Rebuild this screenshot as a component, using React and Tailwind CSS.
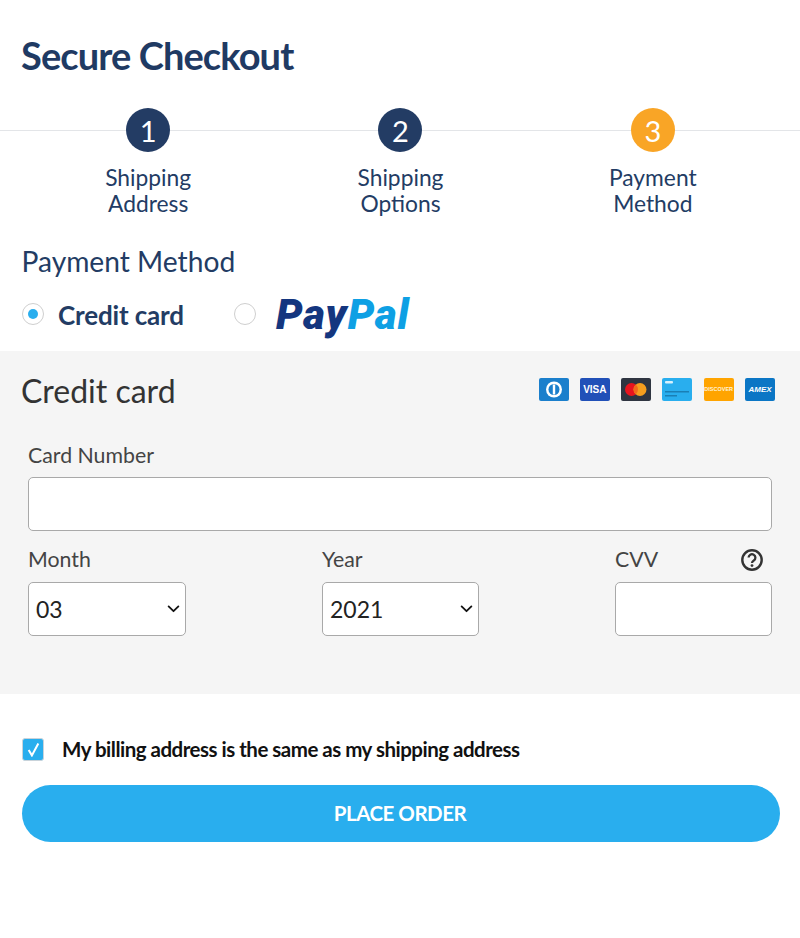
const steps = [
  { n: 1, label: ["Shipping", "Address"], done: true },
  { n: 2, label: ["Shipping", "Options"], done: true },
  { n: 3, label: ["Payment", "Method"], done: false },
];

const DinersIcon = () => (
  <svg viewBox="0 0 30 23" className="w-[30px] h-[23px]">
    <rect width="30" height="23" rx="2" fill="#1b7fcc" />
    <circle cx="15" cy="11.5" r="8" fill="#fff" />
    <circle cx="15" cy="11.5" r="5.5" fill="#1b7fcc" />
    <rect x="13.8" y="6.5" width="2.4" height="10" fill="#fff" />
  </svg>
);

const VisaIcon = () => (
  <div className="w-[30px] h-[23px] rounded-[2px] bg-[#2150b8] flex items-center justify-center text-white text-[10px] font-black leading-none">
    VISA
  </div>
);

const MastercardIcon = () => (
  <svg viewBox="0 0 30 23" className="w-[30px] h-[23px]">
    <rect width="30" height="23" rx="2" fill="#2f3541" />
    <circle cx="10.5" cy="11.5" r="6.5" fill="#e8141e" />
    <circle cx="19" cy="11.5" r="6.5" fill="#f59e1e" />
    <path d="M14.75 6.6a6.5 6.5 0 0 1 0 9.8a6.5 6.5 0 0 1 0-9.8z" fill="#f26a1b" />
  </svg>
);

const GenericCardIcon = () => (
  <svg viewBox="0 0 30 23" className="w-[30px] h-[23px]">
    <rect width="30" height="23" rx="2" fill="#29aeee" />
    <rect x="3" y="3" width="8" height="2.5" rx="1" fill="#d8f1fd" />
    <rect x="3" y="13" width="24" height="1.5" fill="#1a7fb5" />
    <rect x="3" y="17" width="12" height="1.5" fill="#1a7fb5" />
  </svg>
);

const DiscoverIcon = () => (
  <div className="w-[30px] h-[23px] rounded-[2px] bg-[#ffa400] flex items-center justify-center text-[#fff3d6] text-[5.5px] font-bold leading-none">
    DISCOVER
  </div>
);

const AmexIcon = () => (
  <div className="w-[30px] h-[23px] rounded-[2px] bg-[#0b76c5] flex items-center justify-center text-white text-[8px] font-black italic leading-none">
    AMEX
  </div>
);

const Chevron = () => (
  <svg viewBox="0 0 14 9" className="absolute right-[5px] top-[22px] w-[13px] h-[8px] pointer-events-none">
    <path d="M1.5 1.5L7 7l5.5-5.5" fill="none" stroke="#111" strokeWidth="2" strokeLinecap="round" strokeLinejoin="round" />
  </svg>
);

const App = () => {
  return (
    <div className="w-[800px] h-[938px] bg-white font-['Lato','Noto_Sans',sans-serif] overflow-hidden">
      <h1 className="pl-[21px] pt-[32px] text-[38px] leading-[46px] font-bold tracking-[-0.9px] text-[#1f3a63]">
        Secure Checkout
      </h1>

      {/* Steps */}
      <div className="relative mt-[30px] pl-[22px] pr-[21px]">
        <div className="absolute left-0 right-0 top-[22px] h-px bg-[#e3e5e8]" />
        <div className="relative grid grid-cols-3">
          {steps.map((step) => (
            <div key={step.n} className="flex flex-col items-center">
              <div
                className={`w-[44px] h-[44px] rounded-full flex items-center justify-center text-white text-[29px] leading-none ${
                  step.done ? "bg-[#233c64]" : "bg-[#f9a526]"
                }`}
              >
                {step.n}
              </div>
              <div className="mt-[12px] text-center text-[22.8px] leading-[26px] text-[#233c64]">
                {step.label.map((line) => (
                  <div key={line}>{line}</div>
                ))}
              </div>
            </div>
          ))}
        </div>
      </div>

      <h2 className="pl-[21.5px] mt-[26px] text-[28.2px] leading-[38px] text-[#233c64]">Payment Method</h2>

      {/* Method choice */}
      <div className="flex items-center px-[22px] mt-[10px] h-[50px]">
        <div className="w-[22px] h-[22px] rounded-full border border-[#cfcfcf] flex items-center justify-center mb-[3px]">
          <div className="w-[10px] h-[10px] rounded-full bg-[#29aeee]" />
        </div>
        <span className="ml-[14px] text-[26px] font-bold tracking-[-0.15px] text-[#233c64]">Credit card</span>
        <div className="ml-[50px] w-[22px] h-[22px] rounded-full border border-[#cfcfcf] mb-[3px]" />
        <span className="ml-[20px] text-[42px] leading-none font-black italic tracking-[1px] font-['Roboto',sans-serif]">
          <span className="text-[#14367f]">Pay</span>
          <span className="text-[#0ea0e4]">Pal</span>
        </span>
      </div>

      {/* Credit card panel */}
      <div className="mt-[11px] h-[343px] bg-[#f5f5f5] pt-[20px]">
        <div className="flex items-center justify-between pl-[21px] pr-[25px]">
          <h3 className="text-[32px] leading-[40px] text-[#333]">Credit card</h3>
          <div className="flex gap-[11.3px] mb-[3px] font-['Liberation_Sans',sans-serif]">
            <DinersIcon />
            <VisaIcon />
            <MastercardIcon />
            <GenericCardIcon />
            <DiscoverIcon />
            <AmexIcon />
          </div>
        </div>

        <div className="px-[28px] mt-[30px]">
          <label className="block text-[21.3px] leading-[28px] text-[#444]">Card Number</label>
          <div className="mt-[8px] h-[54px] bg-white border border-[#a9a9a9] rounded-[5px]" />

          <div className="grid grid-cols-[158px_157px_157px] justify-between mt-[14px]">
            <div>
              <label className="block text-[21.3px] leading-[28px] text-[#444]">Month</label>
              <div className="relative mt-[9px] h-[54px] bg-white border border-[#a9a9a9] rounded-[5px] pl-[7px] flex items-center text-[23px] text-[#222]">
                03
                <Chevron />
              </div>
            </div>
            <div>
              <label className="block text-[21.3px] leading-[28px] text-[#444]">Year</label>
              <div className="relative mt-[9px] h-[54px] bg-white border border-[#a9a9a9] rounded-[5px] pl-[7px] flex items-center text-[23px] text-[#222]">
                2021
                <Chevron />
              </div>
            </div>
            <div>
              <div className="flex items-center justify-between pr-[9px] h-[28px]">
                <label className="text-[21.3px] leading-[28px] text-[#444]">CVV</label>
                <svg viewBox="0 0 22 22" className="w-[22px] h-[22px] mt-[2px]">
                  <circle cx="11" cy="11" r="9.7" fill="none" stroke="#333" strokeWidth="2.4" />
                  <path d="M7.6 8.6a3.4 3.4 0 1 1 5.2 2.9c-1.1.7-1.8 1.2-1.8 2.6" fill="none" stroke="#333" strokeWidth="2.3" />
                  <circle cx="11" cy="16.6" r="1.4" fill="#333" />
                </svg>
              </div>
              <div className="mt-[9px] h-[54px] bg-white border border-[#a9a9a9] rounded-[5px]" />
            </div>
          </div>
        </div>
      </div>

      {/* Billing + submit */}
      <div className="flex items-center px-[22px] mt-[41px]">
        <div className="w-[22px] h-[23px] rounded-[3px] bg-[#29aeee] border border-[#c9d3da] flex items-center justify-center">
          <svg viewBox="0 0 14 14" className="w-[15px] h-[15px]">
            <path d="M2.5 7.5L5.5 12.5L11.5 1.5" fill="none" stroke="#fff" strokeWidth="1.9" />
          </svg>
        </div>
        <span className="ml-[18px] text-[20.5px] leading-[28px] font-bold tracking-[-0.5px] text-[#111]">
          My billing address is the same as my shipping address
        </span>
      </div>

      <div className="pl-[22px] pr-[20px] mt-[22px]">
        <button className="w-full h-[57px] pr-[2px] rounded-full bg-[#29aeee] text-white text-[20.5px] font-bold tracking-[-0.5px]">
          PLACE ORDER
        </button>
      </div>
    </div>
  );
};

export default App;
